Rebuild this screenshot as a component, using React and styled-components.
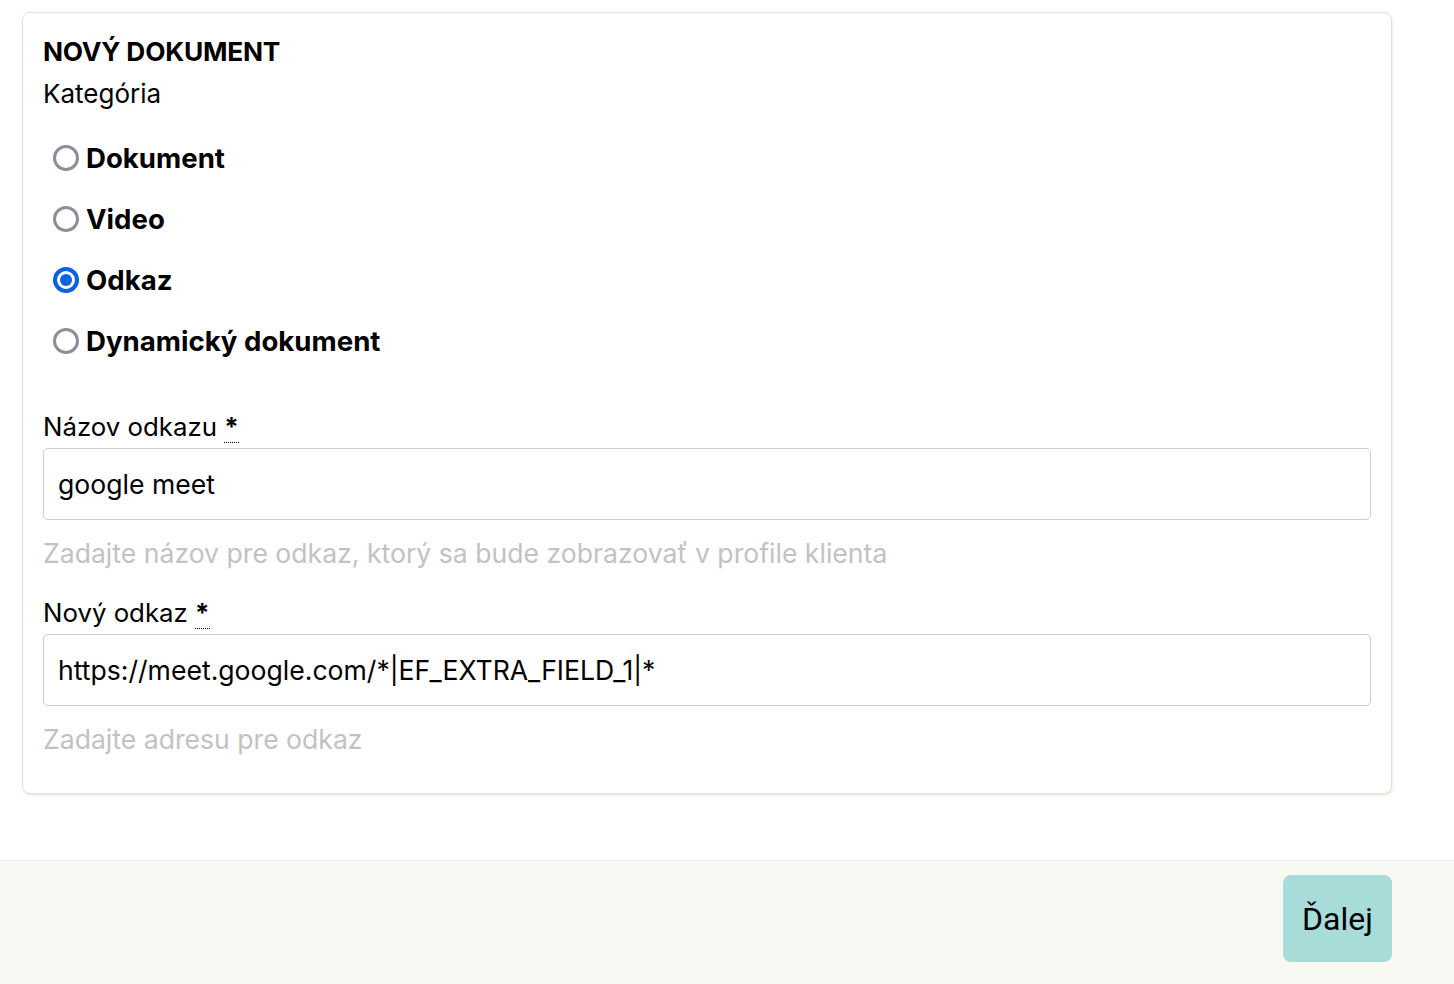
import React, { useState } from "react";
import styled, { createGlobalStyle } from "styled-components";

const Global = createGlobalStyle`
  html, body { margin: 0; padding: 0; background: #ffffff; }
  body { font-family: Inter, "Noto Sans", sans-serif; color: #000; }
  * { box-sizing: border-box; }
`;

const Page = styled.div`
  display: flex;
  flex-direction: column;
  min-height: 984px;
`;

const Main = styled.div`
  padding: 12px 62px 0 22px;
  height: 860px;
`;

const Card = styled.div`
  background: #fff;
  border: 1px solid #e2e3cf;
  border-radius: 8px;
  box-shadow: 1px 2px 3px rgba(0, 0, 0, 0.08);
  padding: 23px 20px 38px 20px;
  display: flex;
  flex-direction: column;
`;

const Title = styled.h1`
  margin: 0;
  font-size: 26.3px;
  font-weight: 700;
  line-height: 32px;
  letter-spacing: -0.2px;
`;

const SubLabel = styled.div`
  margin-top: 10px;
  font-size: 26px;
  line-height: 32px;
  font-weight: 400;
`;

const RadioGroup = styled.div`
  margin-top: 17px;
  display: flex;
  flex-direction: column;
`;

const RadioRow = styled.label`
  height: 61px;
  display: flex;
  align-items: center;
  padding-left: 10px;
  gap: 7px;
  cursor: pointer;
`;

const RadioCircle = styled.span`
  width: 26px;
  height: 26px;
  border-radius: 50%;
  border: ${(p) => (p.$checked ? "4px solid #0b62dc" : "3px solid #8f8d9a")};
  display: flex;
  align-items: center;
  justify-content: center;
  background: #fff;
  &::after {
    content: "";
    display: ${(p) => (p.$checked ? "block" : "none")};
    width: 12px;
    height: 12px;
    border-radius: 50%;
    background: #0b62dc;
  }
`;

const RadioText = styled.span`
  font-size: 27.6px;
  font-weight: 700;
  line-height: 32px;
`;

const Field = styled.div`
  margin-top: ${(p) => p.$top}px;
  display: flex;
  flex-direction: column;
`;

const FieldLabel = styled.div`
  font-size: 25.8px;
  line-height: 32px;
`;

const Req = styled.abbr`
  text-decoration: none;
  border-bottom: 1px dotted #000;
  font-weight: 700;
`;

const Input = styled.input`
  margin-top: 5px;
  height: 72px;
  width: 100%;
  border: 1px solid #cbcbcb;
  border-radius: 5px;
  padding: 0 14px;
  font-family: Inter, "Noto Sans", sans-serif;
  font-size: 26.6px;
  color: #000;
  outline: none;
  background: #fff;
`;

const Help = styled.div`
  margin-top: 17px;
  font-size: 26.6px;
  line-height: 32px;
  color: #c2c2c2;
`;

const Footer = styled.div`
  flex: 1;
  background: #f9f9f3;
  border-top: 1px solid #efefe3;
  display: flex;
  justify-content: flex-end;
  align-items: flex-start;
  padding: 14px 62px 20px 0;
`;

const NextButton = styled.button`
  width: 109px;
  height: 87px;
  border: none;
  border-radius: 8px;
  background: #a8dcd8;
  font-family: Roboto, "Liberation Sans", sans-serif;
  font-size: 32px;
  color: #000;
  cursor: pointer;
`;

const options = ["Dokument", "Video", "Odkaz", "Dynamický dokument"];

export default function App() {
  const [cat, setCat] = useState("Odkaz");
  const [name, setName] = useState("google meet");
  const [url, setUrl] = useState("https://meet.google.com/*|EF_EXTRA_FIELD_1|*");
  return (
    <>
      <Global />
      <Page>
        <Main>
          <Card>
            <Title>NOVÝ DOKUMENT</Title>
            <SubLabel>Kategória</SubLabel>
            <RadioGroup>
              {options.map((o) => (
                <RadioRow key={o} onClick={() => setCat(o)}>
                  <RadioCircle $checked={cat === o} />
                  <RadioText>{o}</RadioText>
                </RadioRow>
              ))}
            </RadioGroup>
            <Field $top={40}>
              <FieldLabel>
                Názov odkazu <Req title="required">*</Req>
              </FieldLabel>
              <Input value={name} onChange={(e) => setName(e.target.value)} />
              <Help>Zadajte názov pre odkaz, ktorý sa bude zobrazovať v profile klienta</Help>
            </Field>
            <Field $top={28}>
              <FieldLabel>
                Nový odkaz <Req title="required">*</Req>
              </FieldLabel>
              <Input value={url} onChange={(e) => setUrl(e.target.value)} />
              <Help>Zadajte adresu pre odkaz</Help>
            </Field>
          </Card>
        </Main>
        <Footer>
          <NextButton>Ďalej</NextButton>
        </Footer>
      </Page>
    </>
  );
}
